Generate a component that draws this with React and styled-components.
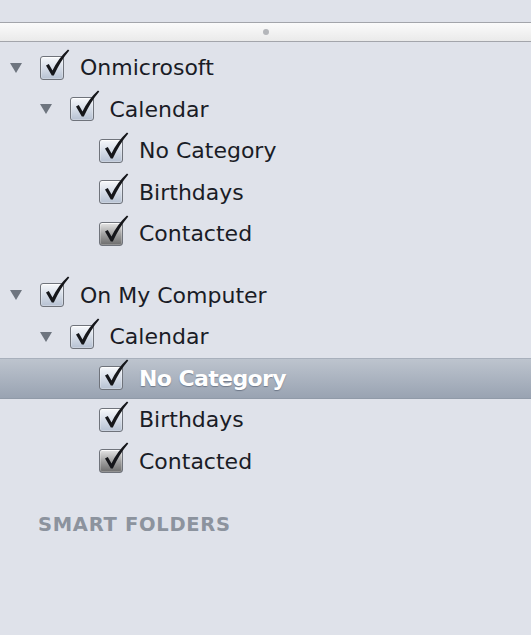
import React from 'react';
import styled, { createGlobalStyle } from 'styled-components';

const GlobalStyle = createGlobalStyle`
  html, body {
    margin: 0;
    padding: 0;
    background: #dfe2ea;
  }
  body {
    font-family: "DejaVu Sans", "Noto Sans", sans-serif;
  }
`;

const Sidebar = styled.div`
  width: 531px;
  height: 635px;
  background: #dfe2ea;
  display: flex;
  flex-direction: column;
  overflow: hidden;
`;

const TopGap = styled.div`
  height: 22px;
  flex-shrink: 0;
`;

const Splitter = styled.div`
  height: 18px;
  flex-shrink: 0;
  border-top: 1px solid #a3a5ab;
  border-bottom: 1px solid #a3a5ab;
  background: linear-gradient(#fbfbfb, #eaeaea);
  display: flex;
  align-items: center;
  justify-content: center;
`;

const Grip = styled.div`
  width: 6px;
  height: 6px;
  border-radius: 50%;
  background: #b4b6ba;
`;

const Tree = styled.div`
  padding-top: 5px;
  display: flex;
  flex-direction: column;
`;

const Group = styled.div`
  display: flex;
  flex-direction: column;
  margin-bottom: 20px;
`;

const Row = styled.div`
  height: 41.5px;
  box-sizing: border-box;
  display: flex;
  align-items: center;
  padding-left: ${p => 10 + p.$depth * 29.5}px;
  ${p => p.$selected && `
    background: linear-gradient(#bdc4ce, #99a3b2);
    border-top: 1px solid #a8b0bc;
    border-bottom: 1px solid #909aa8;
  `}
`;

const Toggle = styled.div`
  width: 30px;
  flex-shrink: 0;
  display: flex;
  align-items: center;
`;

const Triangle = styled.div`
  width: 0;
  height: 0;
  border-left: 6px solid transparent;
  border-right: 6px solid transparent;
  border-top: 10px solid #6e757f;
`;

const Box = styled.div`
  position: relative;
  width: 24px;
  height: 24px;
  flex-shrink: 0;
  box-sizing: border-box;
  border: 1px solid #6f737b;
  border-radius: 3px;
  background: ${p => p.$dark
    ? 'linear-gradient(#e6e6e6, #a2a2a2 50%, #6c6c6c)'
    : 'linear-gradient(#f6f8fb, #d6dde8 50%, #b6c1d2)'};
  box-shadow: inset 0 1px 0 rgba(255,255,255,0.8), inset 0 0 0 1px rgba(255,255,255,0.25);
`;

const Tick = styled.svg`
  position: absolute;
  left: 0;
  top: -8px;
  width: 30px;
  height: 30px;
  overflow: visible;
`;

const Label = styled.span`
  margin-left: 16px;
  font-size: 22px;
  color: ${p => (p.$selected ? '#ffffff' : '#1a1c26')};
  font-weight: ${p => (p.$selected ? 'bold' : 'normal')};
  letter-spacing: ${p => (p.$selected ? '-0.6px' : '0')};
  text-shadow: ${p => (p.$selected ? '0 1px 1px rgba(60,70,90,0.5)' : 'none')};
  white-space: nowrap;
`;

const SectionTitle = styled.div`
  padding-left: 38px;
  height: 41px;
  margin-top: 2px;
  display: flex;
  align-items: center;
  font-size: 19.5px;
  font-weight: bold;
  color: #8c939e;
  letter-spacing: 0.7px;
`;

const Checkbox = ({ dark }) => (
  <Box $dark={dark}>
    <Tick viewBox="0 0 30 30">
      <path
        d="M5 16.5 L7.8 15 L11.5 21.5 Q17.5 9 27 0.5 L28.3 1.6 Q19.5 12 12.8 26.5 L10.8 26.5 Z"
        fill="#15161a"
      />
    </Tick>
  </Box>
);

const Item = ({ depth, label, expandable, dark, selected }) => (
  <Row $depth={depth} $selected={selected}>
    <Toggle>{expandable && <Triangle />}</Toggle>
    <Checkbox dark={dark} />
    <Label $selected={selected}>{label}</Label>
  </Row>
);

const accounts = [
  { name: 'Onmicrosoft', selected: null },
  { name: 'On My Computer', selected: 'No Category' },
];

const categories = [
  { name: 'No Category' },
  { name: 'Birthdays' },
  { name: 'Contacted', dark: true },
];

export default function App() {
  return (
    <Sidebar>
      <GlobalStyle />
      <TopGap />
      <Splitter>
        <Grip />
      </Splitter>
      <Tree>
        {accounts.map(acc => (
          <Group key={acc.name}>
            <Item depth={0} label={acc.name} expandable />
            <Item depth={1} label="Calendar" expandable />
            {categories.map(c => (
              <Item
                key={c.name}
                depth={2}
                label={c.name}
                dark={c.dark}
                selected={acc.selected === c.name}
              />
            ))}
          </Group>
        ))}
        <SectionTitle>SMART FOLDERS</SectionTitle>
      </Tree>
    </Sidebar>
  );
}
